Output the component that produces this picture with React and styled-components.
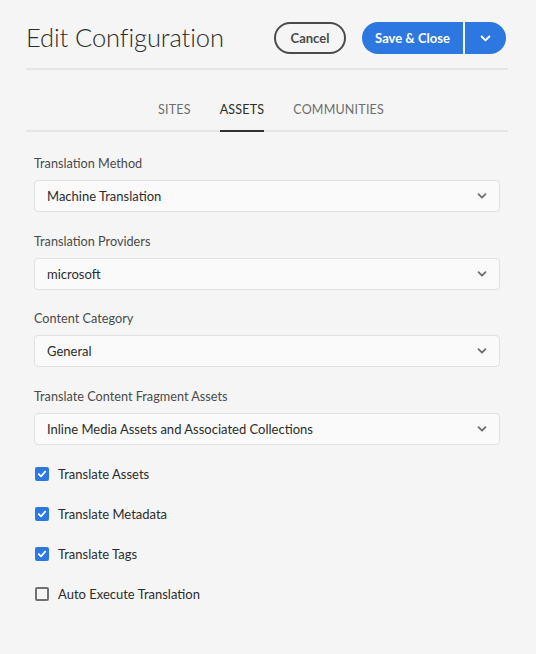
import React from "react";
import styled, {createGlobalStyle} from "styled-components";

const GlobalStyle = createGlobalStyle`
  html, body {
    margin: 0;
    padding: 0;
    background: #f5f5f5;
  }
  body {
    font-family: Lato, "Open Sans", sans-serif;
    color: #2c2c2c;
  }
`;

const Page = styled.div`
  padding: 22px 28px 0 26px;
  min-height: 654px;
  box-sizing: border-box;
`;

const Header = styled.header`
  display: flex;
  align-items: center;
  justify-content: space-between;
  padding-bottom: 14px;
  border-bottom: 2px solid #e6e6e6;
`;

const Title = styled.h1`
  margin: 0 0 2px;
  font-size: 25.5px;
  font-weight: 300;
  color: #2c2c2c;
  letter-spacing: -0.1px;
`;

const Actions = styled.div`
  display: flex;
  align-items: center;
  gap: 16px;
  margin-right: 2px;
`;

const Button = styled.button`
  height: 32px;
  border-radius: 16px;
  font-family: inherit;
  font-size: 13px;
  font-weight: 700;
  cursor: pointer;
  padding: 0 14px;
`;

const OutlineButton = styled(Button)`
  width: 72px;
  background: transparent;
  border: 2px solid #4b4b4b;
  color: #4b4b4b;
`;

const Split = styled.div`
  display: flex;
  gap: 2px;
`;

const CtaButton = styled(Button)`
  background: #2d78e0;
  border: none;
  color: #fff;
  border-radius: ${p => (p.$left ? "16px 0 0 16px" : "0 16px 16px 0")};
  width: ${p => (p.$left ? "101px" : "41px")};
  padding: 0;
  display: flex;
  align-items: center;
  justify-content: center;
`;

const Tabs = styled.nav`
  display: flex;
  justify-content: center;
  gap: 29px;
  padding-left: 8px;
  border-bottom: 2px solid #e6e6e6;
  margin-top: 32px;
`;

const Tab = styled.div`
  font-size: 12.5px;
  letter-spacing: 0.2px;
  color: ${p => (p.$active ? "#2c2c2c" : "#6e6e6e")};
  padding: 0 0 13px;
  margin-bottom: -2px;
  border-bottom: 2px solid ${p => (p.$active ? "#323232" : "transparent")};
`;

const Form = styled.div`
  padding: 21px 8px 0;
  display: flex;
  flex-direction: column;
`;

const Fields = styled.div`
  display: flex;
  flex-direction: column;
  gap: 18.5px;
`;

const Field = styled.div`
  display: flex;
  flex-direction: column;
`;

const Label = styled.label`
  font-size: 12.7px;
  color: #4b4b4b;
  line-height: 20px;
  margin-bottom: 7px;
`;

const Select = styled.div`
  height: 32px;
  box-sizing: border-box;
  border: 1px solid #e1e1e1;
  border-radius: 4px;
  background: #fafafa;
  display: flex;
  align-items: center;
  justify-content: space-between;
  padding: 0 12px 0 12px;
  font-size: 13px;
  color: #2c2c2c;
`;

const Checks = styled.div`
  display: flex;
  flex-direction: column;
  margin-top: 9px;
`;

const CheckRow = styled.label`
  display: flex;
  align-items: center;
  gap: 9px;
  height: 40px;
  font-size: 13px;
  color: #2c2c2c;
`;

const Box = styled.span`
  width: 14px;
  height: 14px;
  box-sizing: border-box;
  border-radius: 2px;
  margin-left: 1px;
  display: flex;
  align-items: center;
  justify-content: center;
  background: ${p => (p.$checked ? "#2d78e0" : "transparent")};
  border: 2px solid ${p => (p.$checked ? "#2d78e0" : "#707070")};
`;

const Chevron = ({color = "#6e6e6e", size = 10}) => (
  <svg width={size} height={size} viewBox="0 0 10 10">
    <path d="M1.5 3.2 L5 6.7 L8.5 3.2" fill="none" stroke={color} strokeWidth="1.8" strokeLinecap="round" strokeLinejoin="round"/>
  </svg>
);

const Tick = () => (
  <svg width="10" height="10" viewBox="0 0 10 10">
    <path d="M1.8 5.2 L4 7.3 L8.2 2.6" fill="none" stroke="#fff" strokeWidth="1.8" strokeLinecap="round" strokeLinejoin="round"/>
  </svg>
);

const fields = [
  ["Translation Method", "Machine Translation"],
  ["Translation Providers", "microsoft"],
  ["Content Category", "General"],
  ["Translate Content Fragment Assets", "Inline Media Assets and Associated Collections"],
];

const checks = [
  ["Translate Assets", true],
  ["Translate Metadata", true],
  ["Translate Tags", true],
  ["Auto Execute Translation", false],
];

export default function App() {
  return (
    <Page>
      <GlobalStyle/>
      <Header>
        <Title>Edit Configuration</Title>
        <Actions>
          <OutlineButton>Cancel</OutlineButton>
          <Split>
            <CtaButton $left>Save &amp; Close</CtaButton>
            <CtaButton><Chevron color="#fff" size={11}/></CtaButton>
          </Split>
        </Actions>
      </Header>
      <Tabs>
        <Tab>SITES</Tab>
        <Tab $active>ASSETS</Tab>
        <Tab>COMMUNITIES</Tab>
      </Tabs>
      <Form>
        <Fields>
          {fields.map(([label, value]) => (
            <Field key={label}>
              <Label>{label}</Label>
              <Select>
                <span>{value}</span>
                <Chevron/>
              </Select>
            </Field>
          ))}
        </Fields>
        <Checks>
          {checks.map(([label, checked]) => (
            <CheckRow key={label}>
              <Box $checked={checked}>{checked && <Tick/>}</Box>
              {label}
            </CheckRow>
          ))}
        </Checks>
      </Form>
    </Page>
  );
}
